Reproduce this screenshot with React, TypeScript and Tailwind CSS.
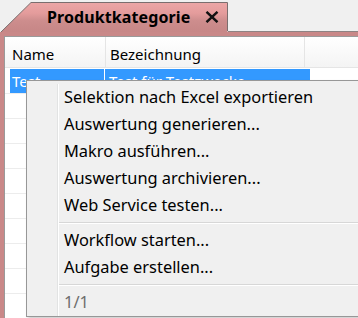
import React from "react";

const menuItems1 = [
  "Selektion nach Excel exportieren",
  "Auswertung generieren...",
  "Makro ausführen...",
  "Auswertung archivieren...",
  "Web Service testen...",
];
const menuItems2 = ["Workflow starten...", "Aufgabe erstellen..."];

function MenuItem({ label, muted }: { label: string; muted?: boolean }) {
  return (
    <div className={`h-[27px] flex items-center pl-[5px] whitespace-nowrap ${muted ? "text-[#6d6d6d]" : "text-black"}`}>
      {label}
    </div>
  );
}

function Separator() {
  return (
    <div className="h-[8px] pt-[3px]">
      <div className="h-[1px] bg-[#d7d7d7]" />
      <div className="h-[1px] bg-white" />
    </div>
  );
}

export default function App() {
  const rows = Array.from({ length: 9 });
  return (
    <div className="w-[358px] h-[318px] bg-[#f0f0f0] relative overflow-hidden font-['Noto_Sans',sans-serif] text-black">
      {/* tab strip */}
      <div className="flex h-[32px] items-end">
        <div className="relative w-[228px] h-[30px] flex items-center">
          <svg className="absolute inset-0" width="228" height="30" viewBox="0 0 228 30">
            <defs>
              <linearGradient id="tabg" x1="0" y1="0" x2="0" y2="1">
                <stop offset="0" stopColor="#eca6a6" />
                <stop offset="0.35" stopColor="#e49c9c" />
                <stop offset="0.6" stopColor="#cd8d8d" />
                <stop offset="1" stopColor="#c68686" />
              </linearGradient>
            </defs>
            <polygon points="0,31 31,0.5 227.5,0.5 227.5,30" fill="url(#tabg)" />
            <polyline points="0,31 31,0.5 227.5,0.5 227.5,29" fill="none" stroke="#7a6e6e" strokeWidth="1" />
          </svg>
          <span className="relative ml-[47px] font-bold text-[16px] leading-none tracking-[0.1px]">Produktkategorie</span>
          <svg className="relative ml-[15px]" width="14" height="12" viewBox="0 0 14 12">
            <path d="M1.5 0.8 L12.5 11.2 M12.5 0.8 L1.5 11.2" stroke="#111" strokeWidth="2.4" />
          </svg>
        </div>
        <div className="flex-1 h-full border-b border-[#8f8383]" />
      </div>

      {/* pink frame body */}
      <div className="bg-[#c98888] pl-[4px] pt-[4px] h-[286px]">
        <div className="bg-white border-l border-t border-[#9a9a9a] h-full">
          {/* header */}
          <div className="flex h-[31px] border-b border-[#e5e5e5] bg-gradient-to-b from-white to-[#f4f4f4] text-[15px]">
            <div className="w-[101px] border-r border-[#e5e5e5] pl-[7px] pt-[7px] leading-[20px]">Name</div>
            <div className="w-[199px] border-r border-[#e5e5e5] pl-[4px] pt-[7px] leading-[20px]">Bezeichnung</div>
            <div className="flex-1" />
          </div>
          <div className="mt-[1px]">
            <div className="h-[25px] border-b border-[#ececec] pl-[5px]">
              <div className="w-[300px] h-full bg-[#3399ff] flex text-white text-[15px] leading-[20px] items-center">
                <div className="w-[95px] pl-[2px] border-r border-white h-full flex items-center">Test</div>
                <div className="pl-[4px]">Test für Testzwecke</div>
              </div>
            </div>
            {rows.map((_, i) => (
              <div key={i} className="h-[25px] border-b border-[#ececec]" />
            ))}
          </div>
        </div>
      </div>

      {/* context menu */}
      <div className="absolute left-[26px] top-[80px] w-[360px] border border-[#979797] bg-[#f0f0f0] px-[2px] pt-[3px] flex text-[16.4px] shadow-[2px_2px_3px_rgba(0,0,0,0.2)]">
        <div className="w-[29px] border-r border-[#e2e3e3] shadow-[1px_0_0_#ffffff]" />
        <div className="flex-1 pl-[1px]">
          {menuItems1.map((m) => (
            <MenuItem key={m} label={m} />
          ))}
          <Separator />
          {menuItems2.map((m) => (
            <MenuItem key={m} label={m} />
          ))}
          <Separator />
          <MenuItem label="1/1" muted />
        </div>
      </div>
    </div>
  );
}
